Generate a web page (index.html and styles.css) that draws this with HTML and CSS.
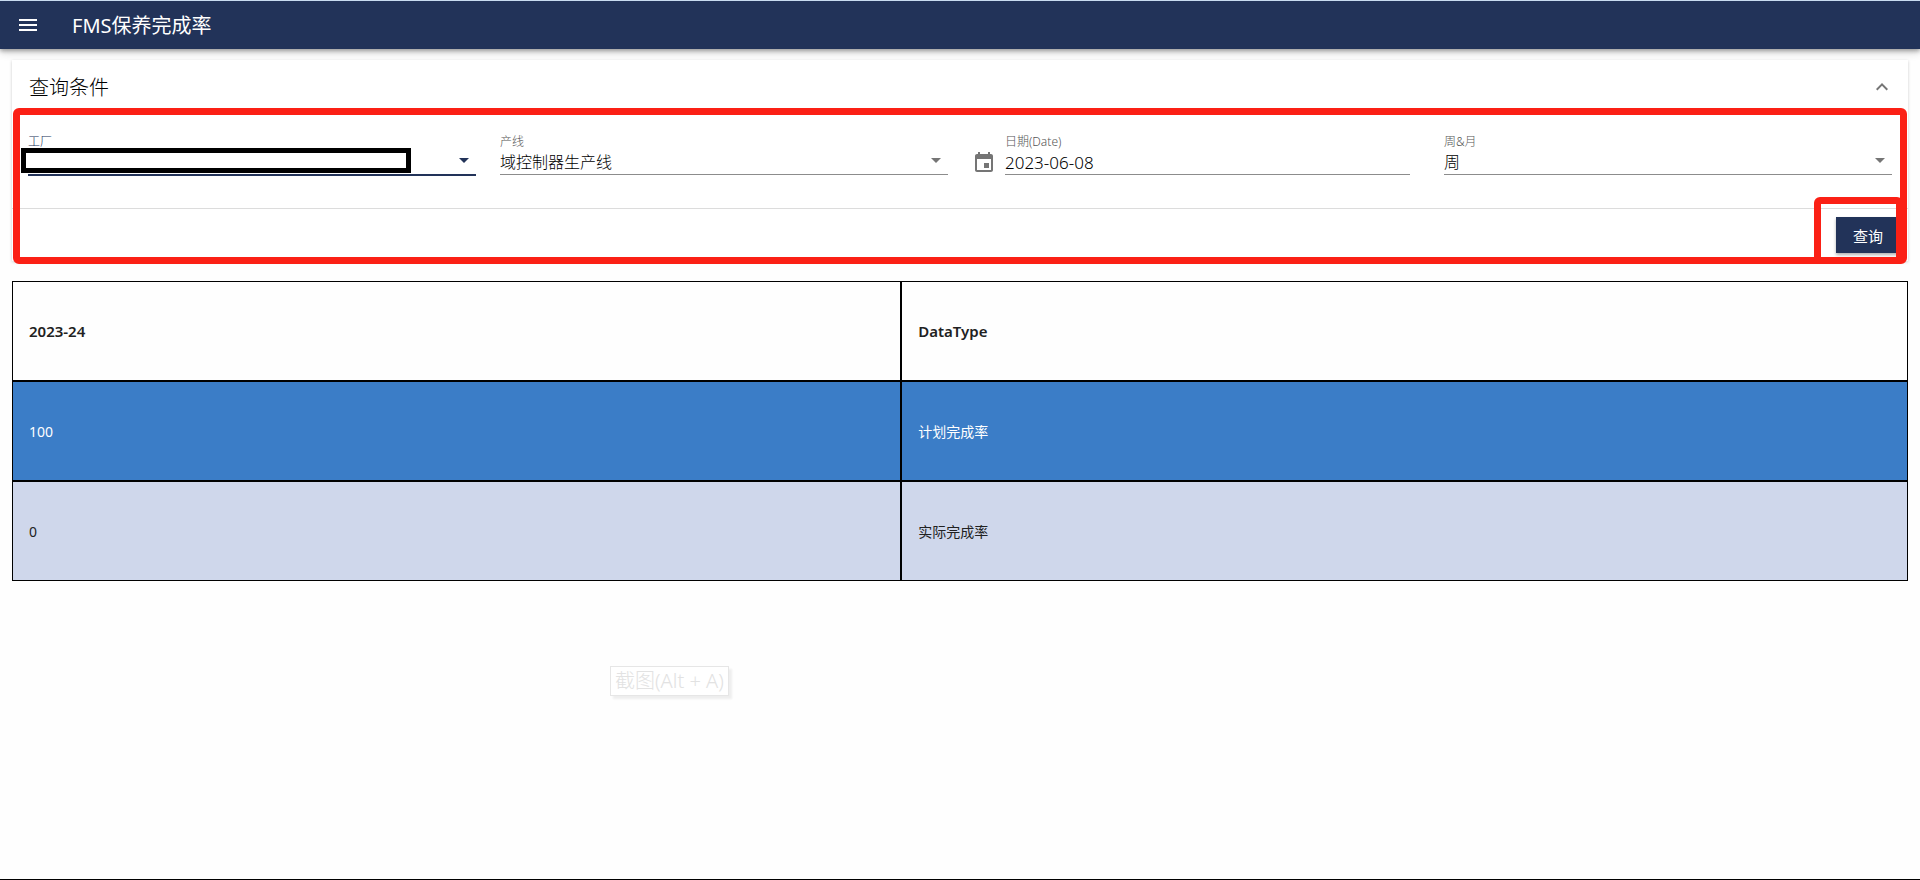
FILE: index.html
```html
<!DOCTYPE html>
<html lang="zh-CN">
<head>
<meta charset="utf-8">
<title>FMS保养完成率</title>
<link rel="stylesheet" href="styles.css">
</head>
<body class="page">
<header class="topbar">
  <button class="icon-button" type="button" aria-label="菜单">
    <svg class="icon" viewBox="0 0 24 24"><path d="M3 18h18v-2H3v2zm0-5h18v-2H3v2zm0-7v2h18V6H3z"/></svg>
  </button>
  <h1 class="topbar-title">FMS保养完成率</h1>
</header>
<main class="content">
  <form class="panel">
    <div class="panel-header">
      <h2 class="panel-title">查询条件</h2>
      <button class="icon-button panel-toggle" type="button" aria-label="收起">
        <svg class="icon" viewBox="0 0 24 24"><path d="M12 8l-6 6 1.410 1.410L12 10.830l4.590 4.580L18 14z"/></svg>
      </button>
    </div>
    <div class="fields">
      <div class="field field-active">
        <label class="field-label" for="factory">工厂</label>
        <div class="field-control">
          <select class="field-input" id="factory"><option></option></select>
          <svg class="arrow" viewBox="0 0 10 5"><path d="M0 0h10L5 5z"/></svg>
        </div>
        <div class="mask"></div>
      </div>
      <div class="field">
        <label class="field-label" for="line">产线</label>
        <div class="field-control">
          <select class="field-input" id="line"><option>域控制器生产线</option></select>
          <svg class="arrow" viewBox="0 0 10 5"><path d="M0 0h10L5 5z"/></svg>
        </div>
      </div>
      <div class="date-group">
        <svg class="icon date-icon" viewBox="0 0 24 24"><path d="M17 12h-5v5h5v-5zM16 1v2H8V1H6v2H5c-1.110 0-1.990.9-1.990 2L3 19c0 1.100.89 2 2 2h14c1.100 0 2-.9 2-2V5c0-1.100-.9-2-2-2h-1V1h-2zm3 18H5V8h14v11z"/></svg>
        <div class="field date-field">
          <label class="field-label" for="date">日期(Date)</label>
          <div class="field-control">
            <input class="field-input field-date" id="date" type="text" value="2023-06-08">
          </div>
        </div>
      </div>
      <div class="field">
        <label class="field-label" for="period">周&amp;月</label>
        <div class="field-control">
          <select class="field-input" id="period"><option>周</option></select>
          <svg class="arrow" viewBox="0 0 10 5"><path d="M0 0h10L5 5z"/></svg>
        </div>
      </div>
    </div>
    <div class="actions">
      <button class="submit" type="button">查询</button>
    </div>
    <div class="mark mark-fields"></div>
    <div class="mark mark-submit"></div>
  </form>
  <table class="results">
    <thead>
      <tr><th class="cell cell-value">2023-24</th><th class="cell">DataType</th></tr>
    </thead>
    <tbody>
      <tr class="row-plan"><td class="cell">100</td><td class="cell">计划完成率</td></tr>
      <tr class="row-actual"><td class="cell">0</td><td class="cell">实际完成率</td></tr>
    </tbody>
  </table>
</main>
<div class="tooltip">截图(Alt + A)</div>
</body>
</html>
```
FILE: styles.css
```css
* {
  box-sizing: border-box;
}

.page {
  position: relative;
  min-height: 100vh;
  margin: 0;
  border-top: 1px solid #c9dcf0;
  border-bottom: 1px solid #000;
  background: #fefefe;
  color: #212121;
  font-family: "Noto Sans", "Noto Sans CJK SC", sans-serif;
}

.topbar {
  display: flex;
  align-items: center;
  gap: 32px;
  height: 48px;
  padding: 0 16px;
  background: #223359;
  color: #fff;
  box-shadow: 0 2px 4px rgba(0, 0, 0, 0.3), 0 4px 8px rgba(0, 0, 0, 0.14);
}

.topbar-title,
.panel-title {
  margin: 0;
  padding-top: 2px;
  font-size: 20px;
  line-height: 28px;
  font-weight: 400;
}

.icon-button {
  display: flex;
  padding: 0;
  border: 0;
  background: none;
  color: inherit;
}

.icon {
  width: 24px;
  height: 24px;
  flex: none;
  fill: currentColor;
}

.content {
  padding: 11px 12px;
}

.panel {
  position: relative;
  margin-bottom: 20px;
  background: #fff;
  box-shadow: 0 1px 3px rgba(0, 0, 0, 0.2);
}

.panel-header {
  display: flex;
  align-items: center;
  justify-content: space-between;
  height: 54px;
  padding: 0 14px 0 17px;
}

.panel-title {
  color: #000;
  font-weight: 300;
}

.panel-toggle {
  color: #757575;
}

.fields {
  display: grid;
  grid-template-columns: repeat(4, minmax(0, 1fr));
  align-items: start;
  gap: 24px;
  padding: 20px 16px 32px;
}

.field {
  position: relative;
}

.field-label {
  display: block;
  height: 16px;
  color: #555;
  font-size: 12px;
  line-height: 16px;
  font-weight: 300;
}

.field-control {
  display: flex;
  align-items: center;
  height: 25px;
  border-bottom: 1px solid #8c8c8c;
}

.field-input {
  flex: 1;
  min-width: 0;
  height: 24px;
  padding: 0;
  border: 0;
  outline: 0;
  appearance: none;
  background: none;
  color: #000;
  font-family: inherit;
  font-size: 16px;
  font-weight: 300;
}

.field-date {
  font-size: 17px;
}

.arrow {
  width: 10px;
  height: 5px;
  margin: 0 7px 4px 0;
  fill: #757575;
}

.field-active .field-label {
  color: #223359;
}

.field-active .field-control {
  height: 26px;
  border-bottom: 2px solid #223359;
}

.field-active .arrow {
  fill: #223359;
}

.date-group {
  display: flex;
  align-items: flex-end;
  gap: 9px;
  padding-right: 10px;
}

.date-icon {
  color: #757575;
}

.date-field {
  flex: 1;
}

.mask {
  position: absolute;
  top: 14px;
  left: -7px;
  width: 390px;
  height: 25px;
  border: 5px solid #000;
  background: #fff;
}

.actions {
  display: flex;
  justify-content: flex-end;
  padding: 8px;
  border-top: 1px solid #dcdcdc;
}

.submit {
  width: 64px;
  height: 36px;
  padding: 0;
  border: 0;
  background: #223359;
  color: #fff;
  font-family: inherit;
  font-size: 15px;
  font-weight: 400;
  box-shadow: 0 2px 3px rgba(0, 0, 0, 0.3);
}

.mark {
  position: absolute;
  border: 7px solid #fb2015;
  border-radius: 6px;
  pointer-events: none;
}

.mark-fields {
  top: 48px;
  right: 1px;
  bottom: -3px;
  left: 1px;
}

.mark-submit {
  right: 5px;
  bottom: -3px;
  width: 89px;
  height: 67px;
}

.results {
  width: 100%;
  border-collapse: separate;
  border-spacing: 0;
  border: 0;
  font-size: 14px;
}

.cell {
  height: 100px;
  padding: 0 16px;
  border: 1px solid #000;
  text-align: left;
}

th.cell {
  font-size: 15px;
  font-weight: 600;
}

.cell-value {
  width: 46.9%;
}

.row-plan {
  background: #3b7dc7;
  color: #fff;
}

.row-actual {
  background: #cfd7eb;
}

.tooltip {
  position: absolute;
  top: 665px;
  left: 610px;
  padding: 0 4px;
  border: 1px solid #e6e6e6;
  background: #fff;
  color: #e2e2e2;
  font-size: 20px;
  line-height: 28px;
  font-weight: 300;
  box-shadow: 3px 3px 2px #eee;
}
```
